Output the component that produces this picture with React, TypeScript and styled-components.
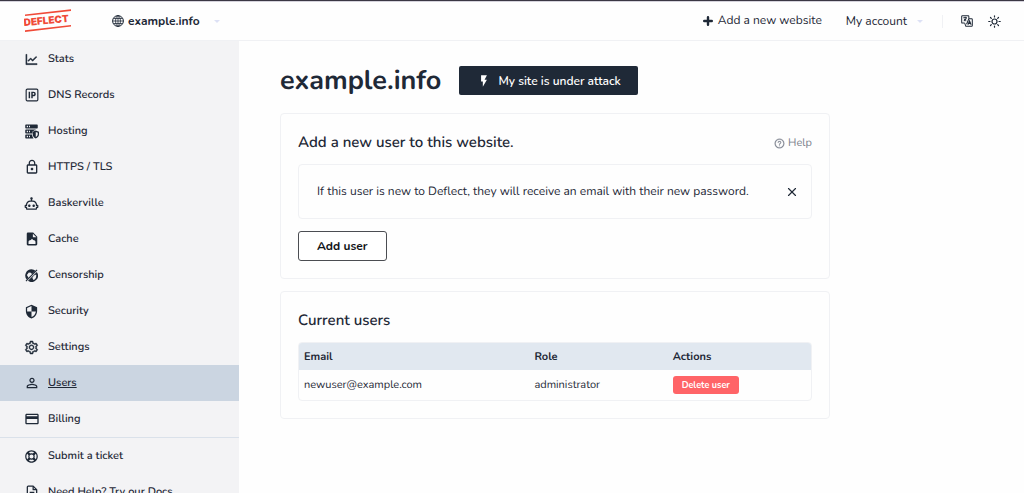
import React from 'react';
import styled, { createGlobalStyle } from 'styled-components';
import { AiOutlineLineChart, AiOutlineSetting, AiOutlineQuestionCircle } from 'react-icons/ai';
import { MdLockOutline, MdSecurity, MdPersonOutline, MdCreditCard, MdFlashOn } from 'react-icons/md';
import { FaRegLifeRing } from 'react-icons/fa';
import { LuX } from 'react-icons/lu';

const ink = '#1f2937';
const line = '#f0f1f4';

const GlobalStyle = createGlobalStyle`
  *, *::before, *::after { box-sizing: border-box; }
  body {
    margin: 0;
    background: #fefefe;
    color: ${ink};
    font-family: Nunito, Lato, 'Open Sans', sans-serif;
    font-size: 12px;
    line-height: 16px;
    text-rendering: geometricPrecision;
  }
  button { font: inherit; color: inherit; cursor: pointer; }
  a { color: inherit; text-decoration: none; }
  svg { flex: none; display: block; }
`;

const Page = styled.div`
  display: flex;
  flex-direction: column;
  height: 100vh;
  overflow: hidden;
`;

const Header = styled.header`
  display: flex;
  align-items: center;
  flex: none;
  min-height: 41px;
  padding: 1px 23px 0 24px;
  border-top: 1px solid #3b3744;
  border-bottom: 1px solid ${line};
  box-shadow: inset 0 1px #d5d3dc;
`;

const SiteMenu = styled.button`
  display: flex;
  align-items: center;
  gap: 4px;
  margin-left: 40px;
  padding: 0;
  border: 0;
  background: none;
  font-weight: 700;
`;

const HeaderActions = styled.div`
  display: flex;
  align-items: center;
  margin-left: auto;
`;

const HeaderLink = styled.a`
  display: flex;
  align-items: center;
  gap: 5px;
`;

const AccountMenu = styled.button`
  display: flex;
  align-items: center;
  margin-left: 24px;
  padding: 0;
  border: 0;
  background: none;
`;

const Caret = styled.span`
  margin-left: 10px;
  border: 3px solid transparent;
  border-top-color: #dde1f5;
  border-bottom: 0;
`;

const IconGroup = styled.div`
  display: flex;
  align-items: center;
  gap: 15px;
  margin-left: 19px;
  padding-left: 18px;
  border-left: 1px solid ${line};
`;

const IconButton = styled.button`
  display: flex;
  align-items: center;
  justify-content: center;
  padding: 0;
  border: 0;
  background: none;
`;

const Body = styled.div`
  display: flex;
  flex: 1;
  min-height: 0;
`;

const Sidebar = styled.nav`
  flex: none;
  width: 239px;
  background: #f3f3f5;
  overflow: hidden;
`;

const NavList = styled.ul`
  margin: 0;
  padding: 0;
  list-style: none;
  & + & { border-top: 1px solid #dae1ea; }
`;

const NavLink = styled.a<{ $active?: boolean }>`
  display: flex;
  align-items: center;
  gap: 9px;
  height: 36px;
  padding: 0 24px;
  font-size: 11px;
  font-weight: 600;
  background: ${p => (p.$active ? '#cbd5e1' : 'transparent')};
  text-decoration: ${p => (p.$active ? 'underline' : 'none')};
`;

const NavIcon = styled.span`
  display: flex;
  flex: none;
  align-items: center;
  justify-content: center;
  width: 15px;
`;

const Main = styled.main`
  flex: 1;
  min-width: 0;
  padding: 25px 41px;
`;

const Content = styled.div`
  display: flex;
  flex-direction: column;
  gap: 12px;
  max-width: 550px;
`;

const TitleRow = styled.div`
  display: flex;
  align-items: center;
  gap: 18px;
  margin-bottom: 6px;
`;

const SiteTitle = styled.h1`
  margin: 0;
  font-size: 27px;
  line-height: 29px;
  font-weight: 700;
`;

const AttackButton = styled.button`
  display: flex;
  align-items: center;
  gap: 7px;
  height: 29px;
  padding: 0 17px 0 18px;
  border: 0;
  border-radius: 2px;
  background: ${ink};
  color: #fff;
  font-weight: 600;
`;

const Card = styled.section`
  padding: 17px;
  border: 1px solid ${line};
  border-radius: 4px;
`;

const CardHead = styled.div`
  display: flex;
  align-items: center;
  justify-content: space-between;
  margin-bottom: 9px;
`;

const CardTitle = styled.h2`
  margin: 0;
  font-size: 15px;
  line-height: 24px;
  font-weight: 600;
`;

const HelpLink = styled.a`
  display: flex;
  align-items: center;
  gap: 3px;
  color: #7b818c;
  font-size: 11px;
`;

const Notice = styled.div`
  display: flex;
  align-items: center;
  justify-content: space-between;
  margin-bottom: 12px;
  padding: 18px 12px 17px 18px;
  border: 1px solid ${line};
  border-radius: 4px;
  line-height: 18px;
`;

const AddButton = styled.button`
  display: block;
  height: 30px;
  padding: 0 18px;
  border: 1px solid #4b4d52;
  border-radius: 3px;
  background: #fff;
  color: #111318;
  font-weight: 700;
`;

const TableFrame = styled.div`
  border: 1px solid ${line};
  border-radius: 4px;
  overflow: hidden;
`;

const Table = styled.table`
  width: 100%;
  border-collapse: collapse;
  table-layout: fixed;
  font-size: 11px;
  text-align: left;
  th, td { padding: 0 5px; }
  th { height: 27px; background: #e1e8f0; font-weight: 700; }
  td { height: 30px; }
  th:nth-child(1) { width: 45%; }
  th:nth-child(2) { width: 27%; }
`;

const DeleteButton = styled.button`
  display: block;
  height: 18px;
  padding: 0 9px;
  border: 0;
  border-radius: 3px;
  background: #ff6467;
  color: #fff;
  font-size: 9px;
  font-weight: 700;
`;

const Logo = () => (
  <svg width="48" height="24" viewBox="0 0 48 24" role="img" aria-label="Deflect">
    <g fill="#f04a38">
      <path d="M1 5.600 47 .2v1.800L1 6.900z" />
      <path d="M1 21.300 47 16v1.400L1 23z" />
      <text x="0" y="17" fontFamily="Inter, sans-serif" fontWeight="900" fontSize="10" transform="rotate(-5.500 1 17)">DEFLECT</text>
    </g>
  </svg>
);

const GlobeIcon = () => (
  <svg width="12" height="12" viewBox="0 0 24 24" fill="none" stroke="currentColor" strokeWidth="2">
    <circle cx="12" cy="12" r="10.800" />
    <ellipse cx="12" cy="12" rx="4.800" ry="10.800" strokeWidth="1.600" />
    <path d="M12 1v22M1 12h22M3 7h18M3 17h18" strokeWidth="1.600" />
  </svg>
);

const PlusIcon = () => (
  <svg width="10" height="10" viewBox="0 0 10 10" stroke="currentColor" strokeWidth="2.400" strokeLinecap="round">
    <path d="M5 1.200v7.600M1.200 5h7.600" />
  </svg>
);

const SunIcon = () => (
  <svg width="13" height="13" viewBox="0 0 26 26" fill="none" stroke="currentColor" strokeWidth="2.400" strokeLinecap="round">
    <circle cx="13" cy="13" r="5" />
    <path d="M13 1.500v2.500M13 22v2.500M1.500 13H4M22 13h2.500M5 5l1.600 1.600M19.400 19.400 21 21M5 21l1.600-1.600M19.400 6.600 21 5" />
  </svg>
);

const TranslateIcon = () => (
  <svg width="12" height="12" viewBox="0 0 26 26" fill="none" stroke="currentColor" strokeWidth="2.200">
    <path d="M17 8V3a1.500 1.500 0 0 0-1.500-1.500H3A1.500 1.500 0 0 0 1.500 3v13A1.500 1.500 0 0 0 3 17.500h5" />
    <path d="M17 8h6a1.500 1.500 0 0 1 1.500 1.500V23a1.500 1.500 0 0 1-1.500 1.500H10.500L8 17.500" />
    <path d="M5 6h8M9 4v2M6 13c3-1 5-3.500 5.500-7M7 8.500c1 2 2.500 3.500 4.500 4.500M17 8l-5 12M15 21l3.500-8.500L22 21M16.500 18.500h4" />
  </svg>
);

const IpIcon = () => (
  <svg width="14" height="14" viewBox="0 0 24 24" fill="none" stroke="currentColor" strokeWidth="2">
    <rect x="2" y="2" width="20" height="20" rx="2" />
    <path d="M7.500 6.500v11M12 17.500v-10h2.500a2.500 2.500 0 0 1 0 5.500H12" strokeWidth="2.500" />
  </svg>
);

const HostingIcon = () => (
  <svg width="14" height="15" viewBox="0 0 28 30" fill="currentColor">
    <path fillRule="evenodd" d="M2 1h22a1.500 1.500 0 0 1 1.500 1.500v5A1.500 1.500 0 0 1 24 9H2A1.500 1.500 0 0 1 .5 7.500v-5A1.500 1.500 0 0 1 2 1Zm1.500 2.500v3H6v-3Zm4.500 0v3h2v-3Z" />
    <path fillRule="evenodd" d="M2 11h20l-7 4v4H2a1.500 1.500 0 0 1-1.500-1.500v-5A1.500 1.500 0 0 1 2 11Zm1.500 2.500v3H6v-3Zm4.500 0v3h2v-3Z" />
    <path fillRule="evenodd" d="M2 21h12c.2 3 1.200 5.500 3 8H2a1.500 1.500 0 0 1-1.500-1.500v-5A1.500 1.500 0 0 1 2 21Zm1.500 2.500v3H6v-3Zm4.500 0v3h2v-3Z" />
    <path fillRule="evenodd" d="m21.500 13 6.500 2.500v5c0 4-2.500 7-6.500 8.500-4-1.500-6-4.500-6-8.500v-5Zm0 3v10c2.500-1.200 4-3 4-6v-2.500Z" />
  </svg>
);

const RobotIcon = () => (
  <svg width="15" height="15" viewBox="0 0 24 24" fill="currentColor">
    <path d="M17.5 15.5C17.5 16.61 16.61 17.5 15.5 17.5S13.5 16.61 13.5 15.5 14.4 13.5 15.5 13.5 17.5 14.4 17.5 15.5M8.5 13.5C7.4 13.5 6.5 14.4 6.5 15.5S7.4 17.5 8.5 17.5 10.5 16.61 10.5 15.5 9.61 13.5 8.5 13.5M23 15V18C23 18.55 22.55 19 22 19H21V20C21 21.11 20.11 22 19 22H5C3.9 22 3 21.11 3 20V19H2C1.45 19 1 18.55 1 18V15C1 14.45 1.45 14 2 14H3C3 10.13 6.13 7 10 7H11V5.73C10.4 5.39 10 4.74 10 4C10 2.9 10.9 2 12 2S14 2.9 14 4C14 4.74 13.6 5.39 13 5.73V7H14C17.87 7 21 10.13 21 14H22C22.55 14 23 14.45 23 15M21 16H19V14C19 11.24 16.76 9 14 9H10C7.24 9 5 11.24 5 14V16H3V17H5V20H19V17H21V16Z" />
  </svg>
);

const CacheIcon = () => (
  <svg width="14" height="14" viewBox="0 0 24 24" fill="currentColor">
    <path fillRule="evenodd" d="M5 1h9l7 7v13a2 2 0 0 1-2 2H5a2 2 0 0 1-2-2V3a2 2 0 0 1 2-2Zm8.500 2v6h6ZM6 20.500h12V17c0-3-2-3-4-3.500l-2-2-2 2c-2 .5-4 .5-4 3.500Z" />
  </svg>
);

const CensorIcon = () => (
  <svg width="13" height="13" viewBox="0 0 24 24" fill="currentColor">
    <path fillRule="evenodd" d="M12 .5a11.500 11.500 0 0 1 7.500 2.800L3.300 19.500A11.500 11.500 0 0 1 12 .5ZM3.500 11l3 5 6.500-6.500-2-2.500-4-.5Z" />
    <path fillRule="evenodd" d="M21.700 5.700A11.500 11.500 0 0 1 5.500 21.600ZM20.500 10l-4 2-3 4 2 4.500c4-1.500 6-6 5-10.500Z" />
    <path d="m1 21.500 20.500-20.500 1.500 1.500L2.500 23z" />
  </svg>
);

const DocIcon = () => (
  <svg width="14" height="14" viewBox="0 0 24 24" fill="none" stroke="currentColor" strokeWidth="2.200" strokeLinejoin="round">
    <path d="M14 2H5.500A1.500 1.500 0 0 0 4 3.500v17A1.500 1.500 0 0 0 5.500 22h13a1.500 1.500 0 0 0 1.500-1.500V8Z" />
    <path d="M14 2v6h6M8 12.500h8M8 17h6" />
  </svg>
);

const mainNav = [
  { label: 'Stats', icon: <AiOutlineLineChart size={15} strokeWidth={30} /> },
  { label: 'DNS Records', icon: <IpIcon /> },
  { label: 'Hosting', icon: <HostingIcon /> },
  { label: 'HTTPS / TLS', icon: <MdLockOutline size={16} /> },
  { label: 'Baskerville', icon: <RobotIcon /> },
  { label: 'Cache', icon: <CacheIcon /> },
  { label: 'Censorship', icon: <CensorIcon /> },
  { label: 'Security', icon: <MdSecurity size={15} /> },
  { label: 'Settings', icon: <AiOutlineSetting size={15} strokeWidth={30} /> },
  { label: 'Users', icon: <MdPersonOutline size={16} />, active: true },
  { label: 'Billing', icon: <MdCreditCard size={16} /> },
];

const supportNav = [
  { label: 'Submit a ticket', icon: <FaRegLifeRing size={13} /> },
  { label: 'Need Help? Try our Docs', icon: <DocIcon /> },
];

type NavEntry = { label: string; icon: React.ReactNode; active?: boolean };

const NavGroup = ({ items }: { items: NavEntry[] }) => (
  <NavList>
    {items.map(item => (
      <li key={item.label}>
        <NavLink href="#" $active={item.active} aria-current={item.active ? 'page' : undefined}>
          <NavIcon>{item.icon}</NavIcon>
          {item.label}
        </NavLink>
      </li>
    ))}
  </NavList>
);

export default function App() {
  return (
    <>
      <GlobalStyle />
      <Page>
        <Header>
          <a href="#" aria-label="Deflect home"><Logo /></a>
          <SiteMenu>
            <GlobeIcon />
            example.info
            <Caret />
          </SiteMenu>
          <HeaderActions>
            <HeaderLink href="#"><PlusIcon />Add a new website</HeaderLink>
            <AccountMenu>My account<Caret /></AccountMenu>
            <IconGroup>
              <IconButton aria-label="Language"><TranslateIcon /></IconButton>
              <IconButton aria-label="Theme"><SunIcon /></IconButton>
            </IconGroup>
          </HeaderActions>
        </Header>
        <Body>
          <Sidebar>
            <NavGroup items={mainNav} />
            <NavGroup items={supportNav} />
          </Sidebar>
          <Main>
            <Content>
              <TitleRow>
                <SiteTitle>example.info</SiteTitle>
                <AttackButton><MdFlashOn size={14} />My site is under attack</AttackButton>
              </TitleRow>
              <Card>
                <CardHead>
                  <CardTitle>Add a new user to this website.</CardTitle>
                  <HelpLink href="#"><AiOutlineQuestionCircle size={11} strokeWidth={20} />Help</HelpLink>
                </CardHead>
                <Notice>
                  If this user is new to Deflect, they will receive an email with their new password.
                  <IconButton aria-label="Dismiss"><LuX size={14} /></IconButton>
                </Notice>
                <AddButton>Add user</AddButton>
              </Card>
              <Card>
                <CardHead><CardTitle>Current users</CardTitle></CardHead>
                <TableFrame>
                  <Table>
                    <thead>
                      <tr><th>Email</th><th>Role</th><th>Actions</th></tr>
                    </thead>
                    <tbody>
                      <tr>
                        <td>newuser@example.com</td>
                        <td>administrator</td>
                        <td><DeleteButton>Delete user</DeleteButton></td>
                      </tr>
                    </tbody>
                  </Table>
                </TableFrame>
              </Card>
            </Content>
          </Main>
        </Body>
      </Page>
    </>
  );
}
